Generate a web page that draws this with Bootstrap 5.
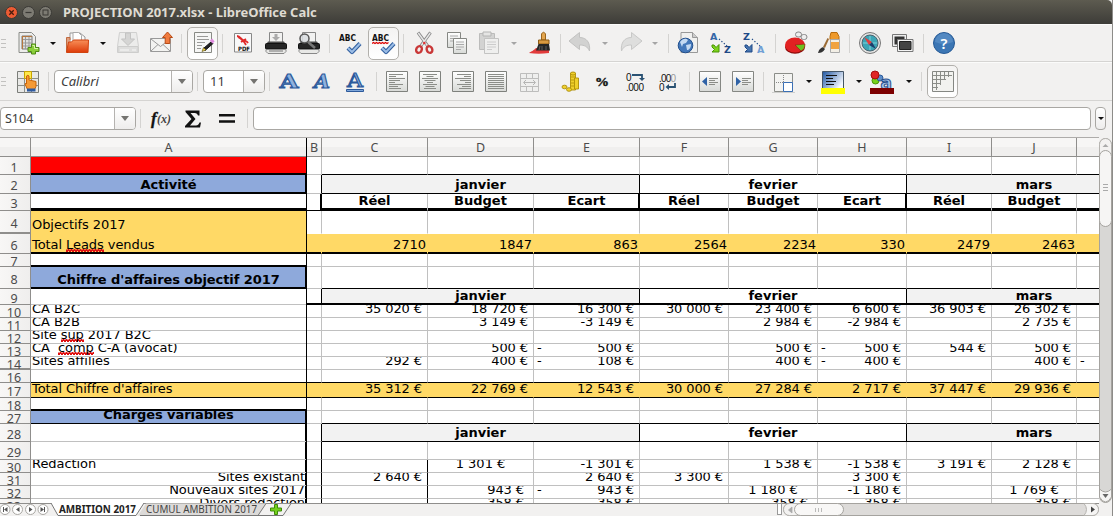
<!DOCTYPE html>
<html lang="fr">
<head>
<meta charset="utf-8">
<title>PROJECTION 2017.xlsx - LibreOffice Calc</title>
<link rel="stylesheet" href="https://cdn.jsdelivr.net/npm/bootstrap@5.3.0/dist/css/bootstrap.min.css">
<style>
html,body{height:516px;overflow:hidden}
body{font-family:"Noto Sans","Open Sans",sans-serif;font-size:13px;line-height:1;background:#f2f1f0;color:#3c3c3c}
.app{width:1113px;height:516px;border-right:1px solid #8d8c89}
.titlebar{height:24px;background:linear-gradient(#5d5b50,#3d3c38);border-radius:0 5px 0 0;color:#dfdbd2;padding-left:5px}
.titlebar .ttl{font-weight:700;font-size:13px;letter-spacing:-.03px;margin-left:7px;white-space:nowrap}
.wbtn{width:13px;height:13px;border-radius:50%;background:#7d7b73;border:1px solid #3a3935;margin-right:4px}
.wbtn svg{display:block;width:11px;height:11px}
.wclose{background:#ec5b33}
.tools{display:grid;align-items:center;height:39px;border-bottom:1px solid #d5d4d2;border-top:1px solid #fbfbfa}
.tools>svg,.tg svg{width:24px;height:24px;display:block}
.tools>*{justify-self:start}
.t1{height:38px;grid-template-columns:16px 33px 15px 35px 16px 33px 32px 6px 35px 9px 33px 33px 32px 9px 30px 35px 10px 33px 31px 34px 17px 32px 8px 34px 17px 33px 16px 9px 33px 33px 32px 9px 33px 32px 9px 33px 32px 9px 30px;padding-left:1px}
.t2{grid-template-columns:15px 32px 6px 143px 6px 66px 9px 33px 32px 33px 9px 33px 33px 33px 34px 31px 10px 32px 33px 34px 31px 9px 33px 32px 9px 34px 15px 35px 14px 36px 15px 6px 40px;padding-left:1px}
.tools>.grip{width:5px;height:9px;border-top:1px solid #c2c1bf;border-bottom:1px solid #c2c1bf;background:linear-gradient(#c2c1bf,#c2c1bf) 0 3px/5px 1px no-repeat}
.sep{width:1px;height:19px;background:#d4d3d1}
.arr{width:0;height:0;border:3px solid transparent;border-top:3.5px solid #111;border-bottom:0}
.arr.off{border-top-color:#a5a5a5}
.tg{width:31px;height:33px;border:1px solid #b2b0ac;border-radius:5px;background:linear-gradient(#f4f3f2,#fff);display:flex;align-items:center;justify-content:center}
.combo{height:23px;border:1px solid #a9a7a3;border-radius:4px;background:#fff;display:flex;overflow:hidden;align-items:stretch;color:#3c3c3c}
.cfont{width:139px}.csize{width:62px}.cname{width:136px}
.combo span{flex:1;line-height:21px;padding-left:6px;white-space:nowrap}
.cname span{padding-left:4px;font-size:12.500px}
.combo i{width:21px;border-left:1px solid #b5b3b0;background:linear-gradient(#fff,#eeedec);display:flex;align-items:center;justify-content:center}
.combo i::after{content:"";border:4px solid transparent;border-top:5px solid #747370;border-bottom:0}
.fbar{height:36px;display:grid;align-items:center;grid-template-columns:140px 10px 32px 34px 31px 6px 842px 12px;padding-bottom:1px}
.fin{height:23px;width:838px;border:1px solid #a9a7a3;border-radius:4px;background:#fff}
.fdd{width:11px;height:23px;border:1px solid #a9a7a3;border-radius:4px;background:linear-gradient(#fff,#eeedec)}
.sheet{width:1099px;height:366px;overflow:hidden;background:#fff;border-top:1px solid #aeacaa;position:relative}
.sheet::after{content:"";position:absolute;left:306px;top:0;bottom:0;width:1px;background:#000}
.rw{display:grid;grid-template-columns:31px 276px 15px 106px 106px 106px 89px 89px 89px 85px 85px 85px;grid-template-rows:100%;width:1162px}
.hd{background:linear-gradient(#f7f6f5 50%,#f0efee 50%);border-right:1px solid #8f8e8c;border-bottom:1px solid #8f8e8c;display:flex;align-items:center;justify-content:center;color:#4c4c4c;font-size:12.500px;padding-top:2px}
.rh{background:linear-gradient(90deg,#f8f7f6,#efeeed);border-right:1px solid #8f8e8c;border-bottom:1px solid #8f8e8c;display:flex;align-items:center;justify-content:center;color:#4c4c4c;overflow:hidden;padding:4px 2px 0 0;font-size:12.500px}
.rh b{font-weight:400;line-height:10px;flex:none}
.hid{box-shadow:inset 0 -1px #8f8e8c}
.cl{border-right:1px solid #c0c0c0;border-bottom:1px solid #c0c0c0;display:flex;align-items:flex-end;overflow:hidden;white-space:pre;color:#000;font:13px/15px "DejaVu Sans",sans-serif;padding:0 1px 1px;min-width:0;min-height:0}
.cl>span{flex:none}
.m3{grid-column:span 3}
.jr{justify-content:flex-end;letter-spacing:-.05px}.jc{justify-content:center}
.eu{justify-content:flex-end;padding-right:5px;letter-spacing:-.1px}
.ac{justify-content:space-between;padding:0 5px 1px 3px;letter-spacing:-.1px}
.bo{font-weight:700}
.kr{border-right-color:#000}
.kb{border-bottom-color:#000}
.kr2{border-right-color:#000;box-shadow:inset -1px 0 #000}
.kb2{border-bottom-color:#000;box-shadow:inset 0 -1px #000}
.kb3{border-bottom-color:#000;box-shadow:inset 0 -2px #000;padding-bottom:2px}
.kbr{border-color:#000;box-shadow:inset -1px -1px #000}
.k33{border-color:#000;box-shadow:inset -1px -2px #000;padding-bottom:2px}
.red{background:#f00}.blu{background:#8ea9db}.yel{background:#ffd966}.gry{background:#f2f2f2}
.yr{border-right-color:#ffd966}
.yb{border-bottom-color:#ffd966}
.wb{border-bottom-color:#fff}
.tA{letter-spacing:-.07px}
.cl u{text-decoration:none;background:radial-gradient(circle at 1px 1px,#e01010 .8px,transparent 1px) 0 100%/3px 2px repeat-x,radial-gradient(circle at 1px 1px,#e01010 .8px,transparent 1px) 1.500px calc(100% - 1px)/3px 2px repeat-x}
.vs{width:13px}
.vs svg,.bot svg{display:block}
.bot{height:13px;width:1112px}
</style>
</head>
<body>
<div class="app d-flex flex-column">
 <div class="titlebar d-flex align-items-center">
  <div class="wbtn wclose"><svg viewBox="0 0 11 11"><path d="M3.3 3.3l4.4 4.4M7.7 3.3l-4.4 4.4" stroke="#4a1c0d" stroke-width="1.3"/></svg></div>
  <div class="wbtn"><svg viewBox="0 0 11 11"><path d="M2.5 5.5h6" stroke="#3a3935" stroke-width="1.2"/></svg></div>
  <div class="wbtn"><svg viewBox="0 0 11 11"><rect x="3" y="3" width="5" height="5" fill="none" stroke="#3a3935"/></svg></div>
  <span class="ttl">PROJECTION 2017.xlsx - LibreOffice Calc</span>
 </div>

 <svg width="0" height="0" class="position-absolute"><defs>
  <linearGradient id="or" x2="0" y2="1"><stop stop-color="#f89059"/><stop offset="1" stop-color="#dd3a08"/></linearGradient>
  <linearGradient id="gy" x2="0" y2="1"><stop stop-color="#fff"/><stop offset="1" stop-color="#d8dad7"/></linearGradient>
  <linearGradient id="bw" x2="1" y2=".6"><stop stop-color="#1f55a0"/><stop offset="1" stop-color="#f4f8ff"/></linearGradient>
 </defs></svg>

 <div class="tools t1">
  <div class="grip"></div>
  <svg viewBox="0 0 24 24"><path d="M2 1.500h12.500l4 4v16H2z" fill="#ededeb" stroke="#8a8c88"/><path d="M5 5h10v13H5z" fill="#dfe0dd" stroke="#777"/><path d="M5 8.500h10M5 12h10M5 15h10M8.500 5v13M12 5v13" stroke="#999"/><path d="M5.500 5v13M5 5.500h10" stroke="#b5773e"/><path d="M14.500 13h4v3.500H22v4h-3.500V23h-4v-2.500H11v-4h3.500z" fill="#8bcf3a" stroke="#4d8a14"/><path d="M15.500 14.500h2v3H21" stroke="#d9f5a8" fill="none"/></svg>
  <div class="arr"></div>
  <svg viewBox="0 0 24 24"><path d="M5 15V2h10l5 4v9z" fill="#fafafa" stroke="#999"/><path d="M8 11V1.500h5.500l3 3V11" fill="#fff" stroke="#aaa"/><path d="M1.500 21V6.500H5V9" fill="#e0a080" stroke="#c06a40"/><path d="M3.500 11l3 0 2-2H23.500L23 21.500H1.500z" fill="url(#or)" stroke="#d0430f"/></svg>
  <div class="arr"></div>
  <svg viewBox="0 0 24 24"><path d="M3.500 1.500h17l2 14v6h-21v-6z" fill="#ececeb" stroke="#d0d0cf"/><path d="M2 15.500h20v6H2z" fill="#dededd" stroke="#cdcdcc"/><path d="M9.500 2h5v6h4L12 14.500 5.500 8h4z" fill="#d5d5d4" stroke="#c3c3c2"/><path d="M4 19h9M16 19h4" stroke="#f8f8f8"/></svg>
  <svg viewBox="0 0 24 24"><path d="M1.500 7.500h20v13h-20z" fill="#f3f3f1" stroke="#999"/><path d="M2 8l9.500 7.500L21 8M2 20l7-6.500M21 20l-7-6.500" fill="none" stroke="#999"/><path d="M18.500 1l5 5.500h-2.700v6h-4.600v-6h-2.700z" fill="#f07b3f" stroke="#b84a14"/></svg>
  <div class="sep"></div>
  <div class="tg"><svg viewBox="0 0 24 24"><path d="M3.500 1.500h17v20h-17z" fill="#f6f6f5" stroke="#888a85"/><path d="M6 5.500h11M6 8.500h12M6 11.500h8M6 14.500h5M6 17.500h4" stroke="#9a9a98"/><path d="M12.500 17.500l8-7 1.500 2-8 7z" fill="#222" stroke="#111"/><path d="M11 20.500l1.500-4 2.500 2.500z" fill="#f0d24c" stroke="#554a10" stroke-width=".6"/><path d="M20 8.500l2.500 3" stroke="#e18be0" stroke-width="3"/></svg></div>
  <div class="sep"></div>
  <svg viewBox="0 0 24 24"><path d="M3.500 2.500h17v18.500h-17z" fill="#f8f8f8" stroke="#888"/><path d="M6 5c3 0 4 3 6 4s4 1 5 3M7 6c4 2 6 4 8 8M10 11l5-3" stroke="#e02a2a" stroke-width="1.800" fill="none"/><text x="7" y="20" font-size="6" font-weight="700" font-family="DejaVu Sans" fill="#111" textLength="12" lengthAdjust="spacingAndGlyphs">PDF</text></svg>
  <svg viewBox="0 0 24 24"><path d="M5.500 1.500h13V12h-13z" fill="#f2f2f1" stroke="#888"/><path d="M10.500 3h3v3H16l-4 4-4-4h2.500z" fill="#aaa"/><path d="M4 10.500h16l2.500 4h-21z" fill="#4a4a4a"/><rect x="1.500" y="12.500" width="21" height="5.500" rx="1" fill="#252525" stroke="#111"/><path d="M2 18.500h20v2l-2 2H4l-2-2z" fill="#e8e8e6" stroke="#888"/><path d="M5 20h14" stroke="#777"/></svg>
  <svg viewBox="0 0 24 24"><path d="M5.500 1.500h13V12h-13z" fill="#f2f2f1" stroke="#888"/><path d="M4 10.500h16l2.500 4h-21z" fill="#4a4a4a"/><rect x="1.500" y="12.500" width="21" height="5.500" rx="1" fill="#252525" stroke="#111"/><path d="M2 18.500h20v2l-2 2H4l-2-2z" fill="#e8e8e6" stroke="#888"/><circle cx="7.500" cy="7.500" r="4.500" fill="#d9dde1" fill-opacity=".85" stroke="#555" stroke-width="1.500"/><path d="M11 11l7 6" stroke="#777" stroke-width="2.500"/></svg>
  <div class="sep"></div>
  <svg viewBox="0 0 24 24"><text x="1" y="10" font-size="8.500" font-weight="700" font-family="DejaVu Sans" fill="#111" textLength="17" lengthAdjust="spacingAndGlyphs">ABC</text><path d="M10 17l4 4 8-8.500" fill="none" stroke="#315f9f" stroke-width="4.200" stroke-linejoin="round"/><path d="M10 17l4 4 8-8.500" fill="none" stroke="#9cbde6" stroke-width="2"/></svg>
  <div class="tg"><svg viewBox="0 0 24 24"><text x="0" y="10" font-size="8.500" font-weight="700" font-family="DejaVu Sans" fill="#111" textLength="17" lengthAdjust="spacingAndGlyphs">ABC</text><path d="M0 12.500l1.500-1 1.500 1 1.500-1 1.500 1 1.500-1 1.500 1 1.500-1 1.500 1 1.500-1 1.500 1 1.500-1" fill="none" stroke="#d00" stroke-width="1.200"/><path d="M10 17l4 4 8-8.500" fill="none" stroke="#315f9f" stroke-width="4.200" stroke-linejoin="round"/><path d="M10 17l4 4 8-8.500" fill="none" stroke="#9cbde6" stroke-width="2"/></svg></div>
  <div class="sep"></div>
  <svg viewBox="0 0 24 24"><path d="M5 1.500L15.500 16M17.500 1.500L7 16" stroke="#888" stroke-width="3"/><path d="M5.300 2L15 15.500M17.200 2L7.500 15.500" stroke="#e8e8e8" stroke-width="1.400"/><ellipse cx="6" cy="18.500" rx="2.700" ry="3.500" transform="rotate(25 6 18.500)" fill="none" stroke="#c93838" stroke-width="2.400"/><ellipse cx="16.500" cy="18.500" rx="2.700" ry="3.500" transform="rotate(-25 16.500 18.500)" fill="none" stroke="#c93838" stroke-width="2.400"/><circle cx="11.300" cy="12" r="1.300" fill="#d33"/></svg>
  <svg viewBox="0 0 24 24"><path d="M1.500 1.500h13v15h-13z" fill="url(#gy)" stroke="#858783"/><path d="M4 5h8M4 7.500h8M4 10h5" stroke="#aaa"/><path d="M7.500 7.500h13v15h-13z" fill="url(#gy)" stroke="#858783"/><path d="M10 11h8M10 13.500h8M10 16h8M10 18.500h5" stroke="#aaa"/></svg>
  <svg viewBox="0 0 24 24"><path d="M2.500 2.500h15v16h-15z" fill="#d3d3d2" stroke="#bcbcbb"/><path d="M6 1h8v4H6z" fill="#e5e5e4" stroke="#b5b5b4"/><path d="M7.500 7.500h14v15h-14z" fill="#efefee" stroke="#c3c3c2"/><path d="M10 11h9M10 13.500h9M10 16h9M10 18.500h5" stroke="#ccc"/></svg>
  <div class="arr off"></div>
  <svg viewBox="0 0 24 24"><path d="M1 22c3-2 4-2 7-5l13 1v4c-7 1-14 1-20 0z" fill="#e23b3b"/><path d="M13.500 9V3q2-3.500 4 0v6z" fill="#e3a54e" stroke="#9a651d"/><path d="M10.500 9h10.500v4H10.500z" fill="#d99a41" stroke="#8d5a14"/><path d="M10.500 13h10.500l1 6.500H8z" fill="#262626"/><path d="M11 19l1-4M14 19v-4M18 19v-4" stroke="#777" stroke-width=".7"/></svg>
  <div class="sep"></div>
  <svg viewBox="0 0 24 24"><path d="M1 10L11.500 1.500v5c7 0 11 5 10 13.500-2-4.500-5-6-10-6v4.500z" fill="#d2d2d1" stroke="#c2c2c1"/></svg>
  <div class="arr off"></div>
  <svg viewBox="0 0 24 24"><path d="M23 10L12.500 1.500v5c-7 0-11 5-10 13.500 2-4.500 5-6 10-6v4.500z" fill="#dededd" stroke="#c8c8c7"/></svg>
  <div class="arr off"></div>
  <div class="sep"></div>
  <svg viewBox="0 0 24 24"><path d="M4 1.500h11.500l5 5v15H4z" fill="#f0f0ef" stroke="#999"/><path d="M15.500 1.500v5h5" fill="#ccc" stroke="#999"/><circle cx="8.500" cy="14.500" r="7.300" fill="#4478ba" stroke="#214f8d"/><path d="M3 11c3-4 6-4 8-2l-2 3-3 1-1 3zM9 14l5-1c0 4-2 6-4 6z" fill="#c5daf2"/></svg>
  <svg viewBox="0 0 24 24"><text x="0" y="8.500" font-size="9.500" font-weight="700" font-family="DejaVu Sans" fill="#3567a7">A</text><text x="14" y="22" font-size="9.500" font-weight="700" font-family="DejaVu Sans" fill="#1f4a87">Z</text><path d="M9 8l8 7" stroke="#204a87" stroke-width="1.200" stroke-dasharray="1.300 1.900"/><path d="M2 14h2l2 2.500L9 13.500V21H2l2.500-2.500L2 16z" fill="#7dd21d" stroke="#4a9405"/></svg>
  <svg viewBox="0 0 24 24"><text x="0" y="8.500" font-size="9.500" font-weight="700" font-family="DejaVu Sans" fill="#1f4a87">Z</text><text x="14" y="22" font-size="9.500" font-weight="700" font-family="DejaVu Sans" fill="#709fd5">A</text><path d="M9 8l8 7" stroke="#204a87" stroke-width="1.200" stroke-dasharray="1.300 1.900"/><path d="M2 14h2l2 2.500L9 13.500V21H2l2.500-2.500L2 16z" fill="#4674b0" stroke="#204a87"/></svg>
  <div class="sep"></div>
  <svg viewBox="0 0 24 24"><ellipse cx="11" cy="16" rx="10" ry="6.800" fill="#8e0b0b"/><ellipse cx="11" cy="14" rx="10" ry="7.500" fill="#e22222"/><path d="M11 14l10-1c0 4-1.500 6-4 7z" fill="#6cc11e" stroke="#a01010" stroke-width=".6"/><rect x="11.500" y="1" width="6" height="5" rx="2.500" fill="#eee" stroke="#888"/><rect x="17" y="3.500" width="6" height="5" rx="2.500" fill="#eee" stroke="#888"/></svg>
  <svg viewBox="0 0 24 24"><path d="M14 1.500h6l2 4v3h-9v-3z" fill="#ee9a2c" stroke="#b96c0e"/><path d="M13.500 8.500h9v13h-9z" fill="#f3efe6" stroke="#aaa"/><path d="M14 11h8v7h-8z" fill="#f1a340"/><path d="M10.500 7l1.500 1-4 9-2-1z" fill="#9b6b35"/><path d="M1 22c1-4 3-5 5-6l2 2c-2 3-4 4-7 4z" fill="#333"/></svg>
  <div class="sep"></div>
  <svg viewBox="0 0 24 24"><circle cx="12" cy="12" r="10.500" fill="#e3e3e2" stroke="#777"/><circle cx="12" cy="12" r="8" fill="#3ba5b5" stroke="#4b6470"/><path d="M12 5v14M5 12h14" stroke="#84d0da"/><path d="M6 6l8 5-3 3z" fill="#e23d3d"/><path d="M18 18l-4-7-3 3z" fill="#1c3d6a"/></svg>
  <svg viewBox="0 0 24 24"><path d="M1.500 3.500h14v12h-14z" fill="#eee" stroke="#777"/><path d="M3.500 5.500h10v8h-10z" fill="#333"/><path d="M6.500 8.500h15.500v12H6.500z" fill="#f4f4f4" stroke="#777"/><path d="M8.500 10.500h11.500v8H8.500z" fill="#444" stroke="#222"/></svg>
  <div class="sep"></div>
  <svg viewBox="0 0 24 24"><circle cx="12" cy="12" r="10.500" fill="#3c76b4" stroke="#265a96"/><path d="M3 11a9 9 0 0 1 18 0q-9 4-18 0z" fill="#6a9bd0" opacity=".5"/><text x="12" y="17.500" font-size="15" text-anchor="middle" fill="#fff" font-weight="600" font-family="Noto Sans">?</text></svg>
 </div>

 <div class="tools t2">
  <div class="grip"></div>
  <svg viewBox="0 0 24 24"><path d="M1.500 1.500h21v21h-21z" fill="#e8e8e6" stroke="#7b7d79"/><path d="M1.500 8.500h21M1.500 15.500h21M8.500 1.500v21M15.500 1.500v21" stroke="#8c8e8a"/><path d="M8.500 1.500h7v7h-7z" fill="#ffe94c" stroke="#c9a400"/><path d="M10.500 6q1.500-1.500 2.500 0v4l7 1.500v5l-1.500 3h-7L9 14q1-1.500 1.500 0z" fill="#f69a35" stroke="#c8640a"/><path d="M11 18.500h8.500v3H11z" fill="#2e5aa0"/></svg>
  <div class="sep"></div>
  <div class="combo cfont"><span class="fst-italic">Calibri</span><i></i></div>
  <div class="sep"></div>
  <div class="combo csize"><span>11</span><i></i></div>
  <div class="sep"></div>
  <svg viewBox="0 0 24 24"><text x="11" y="18" font-size="18" font-weight="700" text-anchor="middle" font-family="DejaVu Serif" fill="#8fb2df" stroke="#2d5a9b" textLength="19" lengthAdjust="spacingAndGlyphs">A</text></svg>
  <svg viewBox="0 0 24 24"><text x="11" y="18" font-size="18" font-style="italic" font-weight="700" text-anchor="middle" font-family="DejaVu Serif" fill="#8fb2df" stroke="#2d5a9b" textLength="16" lengthAdjust="spacingAndGlyphs">A</text></svg>
  <svg viewBox="0 0 24 24"><text x="12" y="17" font-size="18" text-anchor="middle" font-family="DejaVu Serif" fill="#8fb2df" stroke="#2d5a9b" textLength="16" lengthAdjust="spacingAndGlyphs">A</text><path d="M3.500 19.500h17v2h-17z" fill="#7ea6da" stroke="#2d5a9b"/></svg>
  <div class="sep"></div>
  <svg viewBox="0 0 24 24"><path d="M1.500 1.500h21v20h-21z" fill="url(#gy)" stroke="#7f817d"/><path d="M4 4.500h14M4 6.500h7M4 8.500h16M4 10.500h11M4 12.500h6M4 14.500h14M4 16.500h9M4 18.500h12" stroke="#8b8d88"/></svg>
  <svg viewBox="0 0 24 24"><path d="M1.500 1.500h21v20h-21z" fill="url(#gy)" stroke="#7f817d"/><path d="M5 4.500h14M8.500 6.500h7M4 8.500h16M6.500 10.500h11M9 12.500h6M5 14.500h14M7.500 16.500h9M6 18.500h12" stroke="#8b8d88"/></svg>
  <svg viewBox="0 0 24 24"><path d="M1.500 1.500h21v20h-21z" fill="url(#gy)" stroke="#7f817d"/><path d="M6 4.500h14M13 6.500h7M4 8.500h16M9 10.500h11M14 12.500h6M6 14.500h14M11 16.500h9M8 18.500h12" stroke="#8b8d88"/></svg>
  <svg viewBox="0 0 24 24"><path d="M1.500 1.500h21v20h-21z" fill="url(#gy)" stroke="#7f817d"/><path d="M4 4.500h16M4 6.500h16M4 8.500h16M4 10.500h16M4 12.500h16M4 14.500h16M4 16.500h16M4 18.500h16" stroke="#8b8d88"/></svg>
  <svg viewBox="0 0 24 24"><path d="M2.500 3.500h18v18h-18zM2.500 8.500h18M2.500 16.500h18M8.500 3.500v5M14.500 3.500v5M8.500 16.500v5M14.500 16.500v5" fill="#efefee" stroke="#bdbdbc"/><path d="M6 12.500h11M8 10l-2.500 2.500L8 15M15 10l2.500 2.500L15 15" fill="none" stroke="#b5b5b4"/></svg>
  <div class="sep"></div>
  <svg viewBox="0 0 24 24"><g fill="#f0d02c" stroke="#ae8e08" stroke-width=".9"><path d="M11.500 3h5v17h-5z"/><path d="M15.500 8h4v11h-4z"/><ellipse cx="14" cy="3.500" rx="2.500" ry="1.500"/><ellipse cx="5.500" cy="17" rx="2.500" ry="1.800"/><ellipse cx="10" cy="19.500" rx="2.500" ry="1.800"/></g><path d="M12 7h4M12 10h4M12 13h4M12 16h4" stroke="#bb9b0d"/></svg>
  <svg viewBox="0 0 24 24"><text x="11" y="16" font-size="12" font-weight="700" text-anchor="middle" font-family="Liberation Serif" fill="#111" stroke="#111" stroke-width=".4" textLength="14" lengthAdjust="spacingAndGlyphs">%</text></svg>
  <svg viewBox="0 0 24 24"><text x="2" y="10.500" font-size="10" font-family="Liberation Sans" fill="#111">0</text><text x="2" y="20.500" font-size="10" font-family="Liberation Sans" fill="#111" textLength="18">.000</text><path d="M8 5h10v4" fill="none" stroke="#2a5273" stroke-width="1.800"/><path d="M15 8h6l-3 3z" fill="#2a5273"/></svg>
  <svg viewBox="0 0 24 24"><text x="1" y="11.500" font-size="10" font-family="Liberation Sans" fill="#111" textLength="17">.00<tspan fill="#999">0</tspan></text><text x="1" y="20.500" font-size="10" font-family="Liberation Sans" fill="#111">0</text><path d="M17 13v4H10" fill="none" stroke="#2a5273" stroke-width="1.800"/><path d="M11 14v6l-3.500-3z" fill="#2a5273"/></svg>
  <div class="sep"></div>
  <svg viewBox="0 0 24 24"><path d="M1.500 1.500h21v20h-21z" fill="url(#gy)" stroke="#858783"/><path d="M9 7v9l-5-4.500z" fill="#2f62a6"/><path d="M11 8.500h9M11 10.500h6M11 12.500h9M11 14.500h6" stroke="#8b8d88"/></svg>
  <svg viewBox="0 0 24 24"><path d="M1.500 1.500h21v20h-21z" fill="url(#gy)" stroke="#858783"/><path d="M5 7v9l5-4.500z" fill="#2f62a6"/><path d="M11 8.500h9M11 10.500h6M11 12.500h9M11 14.500h6" stroke="#8b8d88"/></svg>
  <div class="sep"></div>
  <svg viewBox="0 0 24 24"><path d="M2.500 3.500h18v18h-18z" fill="#f3f3f1" stroke="#8b8d88"/><path d="M11.500 5v8M4 12.500h8" stroke="#888" stroke-dasharray="1 1"/><path d="M11.500 12.500h9v9h-9z" fill="#fff" stroke="#3a6fb5"/><path d="M0 22.500h23" stroke="#cfcfcd"/></svg>
  <div class="arr"></div>
  <svg viewBox="0 0 24 24"><path d="M1.500 1.500h21v17h-21z" fill="url(#bw)" stroke="#456"/><path d="M5 5.500h11M5 8.500h7M5 11.500h10M5 14.500h8" stroke="#111" stroke-width="1.200"/><path d="M0 18h24v6H0z" fill="#ff0"/></svg>
  <div class="arr"></div>
  <svg viewBox="0 0 24 24"><circle cx="5.500" cy="10.500" r="3.500" fill="#76d11a" stroke="#4a9405"/><circle cx="10" cy="8" r="3" fill="#5b8dca" stroke="#2a5999"/><circle cx="5" cy="5" r="4" fill="#e02626" stroke="#a40f0f"/><text x="10.500" y="18.500" font-size="17" font-weight="700" font-family="DejaVu Sans" fill="#a8c4e8" stroke="#274f8e">a</text><path d="M0 18h24v6H0z" fill="#7d0000"/></svg>
  <div class="arr"></div>
  <div class="sep"></div>
  <div class="tg"><svg viewBox="0 0 24 24"><path d="M1.500 1.500h21v20h-21z" fill="#f2f2ef" stroke="#858783"/><path d="M2 5.500h19M2 9.500h13M2 13.500h8M2 17.500h5M5.500 2v18M9.500 2v13M13.500 2v8M17.500 2v5" stroke="#8b8d88"/></svg></div>
 </div>

 <div class="fbar">
  <div class="combo cname"><span>S104</span><i></i></div>
  <div class="sep"></div>
  <svg width="24" height="24" viewBox="0 0 24 24"><text x="1" y="17" font-size="17" font-style="italic" font-weight="700" font-family="Liberation Serif" fill="#111" stroke="#111" stroke-width=".3">f</text><text x="7" y="16" font-size="12" font-style="italic" font-weight="700" font-family="Liberation Serif" fill="#444" textLength="14" lengthAdjust="spacingAndGlyphs">(x)</text></svg>
  <svg width="24" height="24" viewBox="0 0 24 24"><path d="M3.500 3.500h14v5h-1.500q-.5-2.500-3-2.500H8.500l5 6-5.500 6.500h6q2.500 0 3.500-3H19l-1 5H3v-1.500l6.500-7L3.500 5z" fill="#111"/></svg>
  <svg width="24" height="24" viewBox="0 0 24 24"><path d="M3 8.300h16M3 14.500h16" stroke="#111" stroke-width="2.400"/></svg>
  <div class="sep"></div>
  <div class="fin"></div>
  <div class="fdd d-flex align-items-center justify-content-center"><div class="arr"></div></div>
 </div>

 <div class="d-flex">
  <div class="sheet" id="sheet"></div>
  <div class="vs"><svg width="13" height="366" viewBox="0 0 13 366">
   <rect x=".5" y="1.500" width="12" height="364" rx="6" fill="#d8d7d5" stroke="#a5a39f"/>
   <rect x=".5" y="1.500" width="12" height="20" rx="6" fill="#f3f2f1" stroke="#b5b3af"/><path d="M3.500 10L6.500 7l3 3z" fill="#aaa"/>
   <rect x=".5" y="13.500" width="12" height="76" rx="6" fill="#f6f5f4" stroke="#a5a39f"/><path d="M4 47.500h5M4 50.500h5M4 53.500h5" stroke="#aaa"/>
   <path d="M.5 352q6 6 12 0v8q-6 10-12 0z" fill="#f5f4f3" stroke="#a5a39f"/><path d="M3.500 357h6l-3 4z" fill="#666"/>
  </svg></div>
 </div>

 <div class="bot"><svg width="1112" height="13" viewBox="0 0 1112 13" font-family="Noto Sans" font-size="11">
  <path d="M0 .5h1099" stroke="#8f8e8c"/>
  <g fill="#fff" stroke="#aaa8a4"><circle cx="5" cy="6.500" r="5"/><circle cx="17.500" cy="6.500" r="5"/><circle cx="30.500" cy="6.500" r="5"/><circle cx="43" cy="6.500" r="5"/></g>
  <g fill="#555"><path d="M3 4h1v5H3zM7.500 4v5L4 6.500zM19.500 4v5L16 6.500zM29 4v5l3.500-2.500zM40.500 4v5L44 6.500zM44 4h1v5h-1z"/></g>
  <path d="M138 12.500h120l8-12H146z" fill="#dcdad8"/>
  <path d="M51 0h93l-8 13H58z" fill="#fff"/>
  <path d="M51 0l7 12.500h78l8-12.500M140 12.500h118l8-12M258 12.500h25l8-12" fill="none" stroke="#777"/>
  <text x="59" y="10" font-weight="700" fill="#222" textLength="77" lengthAdjust="spacingAndGlyphs">AMBITION 2017</text>
  <text x="146" y="10" fill="#444" textLength="111" lengthAdjust="spacingAndGlyphs">CUMUL AMBITION 2017</text>
  <path d="M274.500 1.500h3v3.500h4v3h-4v3.500h-3V8h-4V5h4z" fill="#73cf1d" stroke="#3f8a08"/>
  <rect x="777.500" y=".5" width="4" height="11" fill="#fff" stroke="#999"/>
  <rect x="783.500" y=".5" width="315" height="12" rx="6" fill="#dddbd9" stroke="#a5a39f"/>
  <path d="M1084 .5h9a5.500 6 0 0 1 0 12h-9q5-6 0-12z" fill="#f6f5f4" stroke="#b5b3af"/>
  <rect x="783.500" y=".5" width="20" height="12" rx="6" fill="#f3f2f1" stroke="#b5b3af"/>
  <rect x="794.500" y=".5" width="49" height="12" rx="6" fill="#f8f7f6" stroke="#a5a39f"/>
  <path d="M792 4v6l-3.500-3zM815.500 5v4M818.500 5v4M821.500 5v4" fill="#aaa" stroke="#aaa" stroke-width=".8"/><path d="M1091 3.500v6l4-3z" fill="#444"/>
 </svg></div>
</div>

<script>
// Row: [label, height, cell A, classes of B, cells C..K, hidden rows follow]; a cell is "text|classes".
const e9 = c => Array(9).fill('|' + c);
const months = bot => [`janvier|m3 gry jc bo kr ${bot}`, `fevrier|m3 jc bo kr ${bot}`, `mars|m3 gry jc bo kr ${bot}`];
const eur = (list, over = {}) => list.map((v, i) => {
  let cls = over[i] || '';
  if (!v) return '|' + cls;
  if (v[0] === '~') return `-</span><span>${v.slice(1)}|ac ${cls}`;
  return `${v}|${/jc/.test(cls) ? '' : 'eu '}${cls}`;
});
const gold = a => a.map(v => v + ' yel yr kb');
const rows = [
 ['1', 18, '|red kb2 kr', '', e9('kb')],
 ['2', 19, 'Activité|blu jc bo kbr', 'kr', months('kb')],
 ['3', 17, '|kb3 kr', 'kb kr2', ['Réel|jc bo kb3','Budget|jc bo kb3','Ecart|jc bo k33','Réel|jc bo kb3','Budget|jc bo kb3','Ecart|jc bo k33','Réel|jc bo kb3','Budget|jc bo kb3','|kb3']],
 ['4', 23, 'Objectifs 2017|yel yb kr', 'wb', e9('wb'), 1],
 ['6', 20, 'Total <u>Leads</u> vendus|yel kb2 kr', 'yel yr kb2', ['2710','1847','863','2564','2234','330','2479','2463',''].map(v => v + '|jr yel yr kb2')],
 ['7', 13, '|kb2 kr', '', e9('')],
 ['8', 22, "Chiffre d'affaires objectif 2017|blu jc bo kbr", '', e9('kb')],
 ['9', 16, '|kr', 'kb2 kr', months('kb2')],
 ['10', 13, 'CA B2C|kr', '', eur(['35 020 €','18 720 €','16 300 €','30 000 €','23 400 €','6 600 €','36 903 €','26 302 €',''])],
 ['11', 13, 'CA B2B|kr', '', eur(['','3 149 €','-3 149 €','','2 984 €','-2 984 €','','2 735 €',''])],
 ['12', 13, 'Site <u>sup</u> 2017 B2C|kr', '', e9('')],
 ['13', 13, 'CA  <u>comp</u> C-A (avocat)|kr', '', eur(['','500 €','~500 €','','500 €','~500 €','544 €','500 €',''])],
 ['14', 13, 'Sites affiliés|kr', '', eur(['292 €','400 €','~108 €','','400 €','~400 €','','400 €','~']), 1],
 ['16', 13, '|kr kb', 'kb', e9('kb')],
 ['17', 15, "Total Chiffre d'affaires|yel kr kb", 'yel yr kb', gold(eur(['35 312 €','22 769 €','12 543 €','30 000 €','27 284 €','2 717 €','37 447 €','29 936 €','']))],
 ['18', 13, '|kb2 kr', '', e9('')],
 ['27', 13, 'Charges variables|blu jc bo kr2 kb', '', e9('kb')],
 ['28', 18, '|kr2', 'kr', months('kb')],
 ['29', 18, '|kr2', 'kr', e9('')],
 ['30', 13, 'Rédaction|kr2', 'kr', eur(['','1 301 €','-1 301 €','','1 538 €','-1 538 €','3 191 €','2 128 €',''], {0:'kr',1:'jc'})],
 ['31', 13, 'Sites existant|jr kr2', 'kr', eur(['2 640 €','','2 640 €','3 300 €','','3 300 €','','',''], {0:'kr'})],
 ['32', 13, 'Nouveaux sites 2017|jr kr2', 'kr', eur(['','943 € ','~943 €','','1 180 €','-1 180 €','','1 769 €',''], {0:'kr',4:'jc',7:'jc'})],
 ['33', 13, 'Divers rédaction|jr kr2', 'kr', eur(['','358 € ','358 €','','358 € ','358 €','','358 €',''], {0:'kr'})]
];
const cell = s => { const k = s.lastIndexOf('|'); return `<div class="cl ${s.slice(k + 1)}"><span>${s.slice(0, k)}</span></div>`; };
let out = '<div class="rw" style="height:19px"><div class="hd"></div>' +
  [...'ABCDEFGHIJ', ''].map(c => `<div class="hd">${c}</div>`).join('') + '</div>';
for (const [n, h, a, b, cs, hid] of rows)
  out += `<div class="rw" style="height:${h}px"><div class="rh ${hid ? 'hid' : ''}"><b>${n}</b></div>${cell(a + ' tA')}${cell('|' + b)}${cs.map(cell).join('')}</div>`;
document.getElementById('sheet').innerHTML = out;
</script>
<script src="https://cdn.jsdelivr.net/npm/bootstrap@5.3.0/dist/js/bootstrap.bundle.min.js"></script>
</body>
</html>
